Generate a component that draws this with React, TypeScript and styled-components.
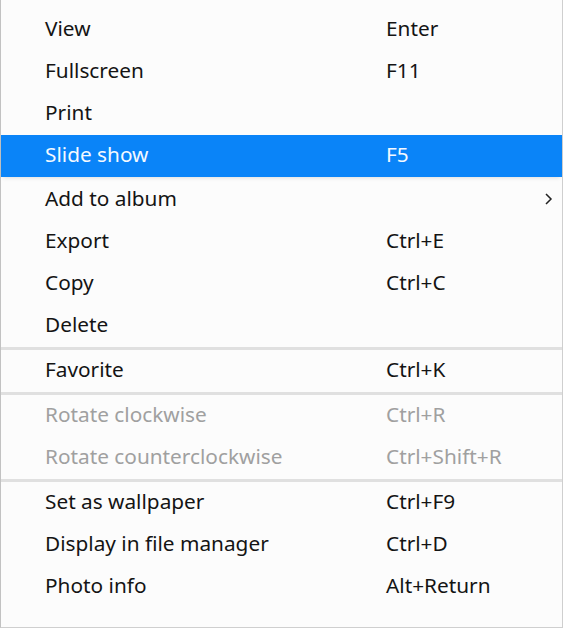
import React from 'react'
import styled, { createGlobalStyle } from 'styled-components'

type Entry =
    | { kind: 'item'; label: string; shortcut?: string; active?: boolean; disabled?: boolean; submenu?: boolean }
    | { kind: 'sep' }

const entries: Entry[] = [
    { kind: 'item', label: 'View', shortcut: 'Enter' },
    { kind: 'item', label: 'Fullscreen', shortcut: 'F11' },
    { kind: 'item', label: 'Print' },
    { kind: 'item', label: 'Slide show', shortcut: 'F5', active: true },
    { kind: 'item', label: 'Add to album', submenu: true },
    { kind: 'item', label: 'Export', shortcut: 'Ctrl+E' },
    { kind: 'item', label: 'Copy', shortcut: 'Ctrl+C' },
    { kind: 'item', label: 'Delete' },
    { kind: 'sep' },
    { kind: 'item', label: 'Favorite', shortcut: 'Ctrl+K' },
    { kind: 'sep' },
    { kind: 'item', label: 'Rotate clockwise', shortcut: 'Ctrl+R', disabled: true },
    { kind: 'item', label: 'Rotate counterclockwise', shortcut: 'Ctrl+Shift+R', disabled: true },
    { kind: 'sep' },
    { kind: 'item', label: 'Set as wallpaper', shortcut: 'Ctrl+F9' },
    { kind: 'item', label: 'Display in file manager', shortcut: 'Ctrl+D' },
    { kind: 'item', label: 'Photo info', shortcut: 'Alt+Return' },
]

export default function App() {
    return <>
        <Global />
        <Menu>
            {entries.map((e, i) => e.kind === 'sep'
                ? <Separator key={i} />
                : <Item key={i} $active={e.active} $disabled={e.disabled}>
                    <Label>{e.label}</Label>
                    <Shortcut>{e.shortcut}</Shortcut>
                    {e.submenu &&
                        <Arrow width="9" height="14" viewBox="0 0 9 14">
                            <polyline points="2,2 7,7 2,12" fill="none" stroke="#222" strokeWidth="1.5" />
                        </Arrow>}
                </Item>
            )}
        </Menu>
    </>
}

const Global = createGlobalStyle`
html, body {
margin:0;
padding:0;
background:#fcfcfc;
}
`;

const Menu = styled.div`
box-sizing:border-box;
width:563px;
height:628px;
background:#fcfcfc;
border-left:1px solid #c2c2c2;
border-right:1px solid #cfcfcf;
border-bottom:1px solid #cfcfcf;
padding-top:9px;
display:flex;
flex-direction:column;
font-family: "Noto Sans", "Open Sans", sans-serif;
font-size:20.8px;
`;

const Item = styled.div<{ $active?: boolean; $disabled?: boolean }>`
position:relative;
box-sizing:border-box;
height:42px;
flex-shrink:0;
display:flex;
align-items:center;
padding-left:44px;
padding-bottom:4px;
color:${p => p.$disabled ? '#a0a0a0' : p.$active ? '#f4f9ff' : '#141414'};
background:${p => p.$active ? '#0a84f8' : 'transparent'};
margin-bottom:${p => p.$active ? '2px' : '0'};
box-shadow:${p => p.$active ? '0 3px 4px -2px rgba(0,0,0,0.12)' : 'none'};
`;

const Label = styled.span`
width:341px;
white-space:nowrap;
`;

const Shortcut = styled.span`
white-space:nowrap;
`;

const Arrow = styled.svg`
position:absolute;
right:9px;
top:13px;
`;

const Separator = styled.div`
height:3px;
flex-shrink:0;
background:#e0e0e0;
`;
